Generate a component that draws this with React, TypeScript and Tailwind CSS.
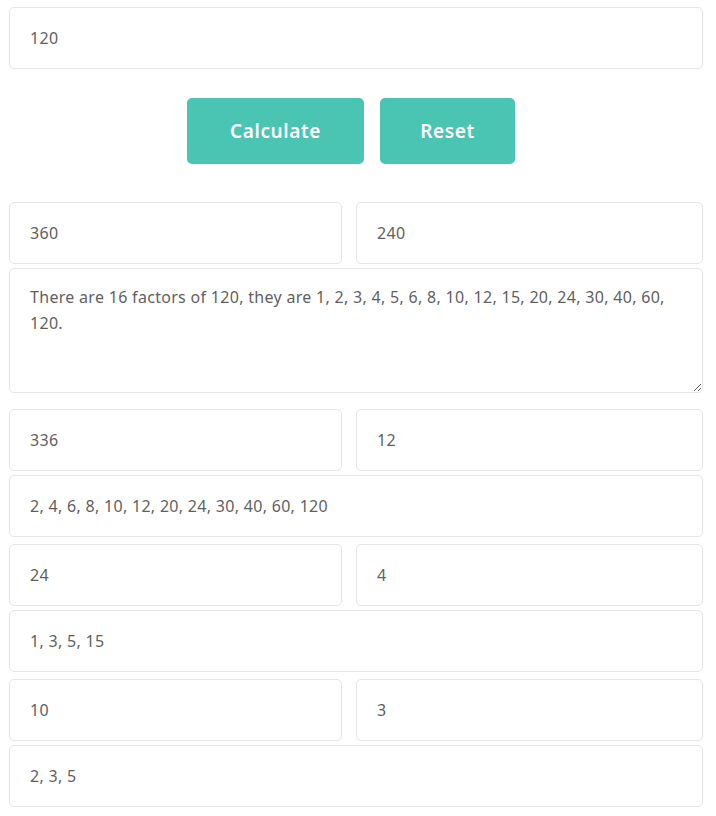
const box =
    "flex h-[62px] items-center rounded-[5px] border border-[#e6e6e6] bg-white px-[20px] text-[16px] tracking-[0.3px] text-[#5f5f5f]";

function Field({ value }: { value: string }) {
    return <div className={box}>{value}</div>;
}

function PairRow({ left, right, full }: { left: string; right: string; full: string }) {
    return (
        <div className="flex flex-col gap-[4px]">
            <div className="grid grid-cols-[333px_347px] gap-[14px]">
                <Field value={left} />
                <Field value={right} />
            </div>
            <Field value={full} />
        </div>
    );
}

export default function App() {
    return (
        <div
            className="min-h-screen bg-white pl-[9px] pt-[7px]"
            style={{ fontFamily: '"Noto Sans", "DejaVu Sans", sans-serif' }}
        >
            <div className="w-[694px]">
                <Field value="120" />

                <div className="mt-[29px] flex justify-center gap-[16px] pr-[10px]">
                    <button className="h-[66px] w-[177px] rounded-[5px] bg-[#4ac4b3] text-[19px] font-semibold tracking-[0.6px] text-white">
                        Calculate
                    </button>
                    <button className="h-[66px] w-[135px] rounded-[5px] bg-[#4ac4b3] text-[19px] font-semibold tracking-[0.6px] text-white">
                        Reset
                    </button>
                </div>

                <div className="mt-[38px] grid grid-cols-[333px_347px] gap-[14px]">
                    <Field value="360" />
                    <Field value="240" />
                </div>
                <textarea
                    readOnly
                    className="mt-[4px] block h-[125px] w-full rounded-[5px] border border-[#e6e6e6] bg-white px-[20px] py-[15px] text-[16px] leading-[26px] tracking-[0.3px] text-[#5f5f5f] outline-none"
                    value="There are 16 factors of 120, they are 1, 2, 3, 4, 5, 6, 8, 10, 12, 15, 20, 24, 30, 40, 60, 120."
                />

                <div className="mt-[16px] flex flex-col gap-[7px]">
                    <PairRow left="336" right="12" full="2, 4, 6, 8, 10, 12, 20, 24, 30, 40, 60, 120" />
                    <PairRow left="24" right="4" full="1, 3, 5, 15" />
                    <PairRow left="10" right="3" full="2, 3, 5" />
                </div>
            </div>
        </div>
    );
}
